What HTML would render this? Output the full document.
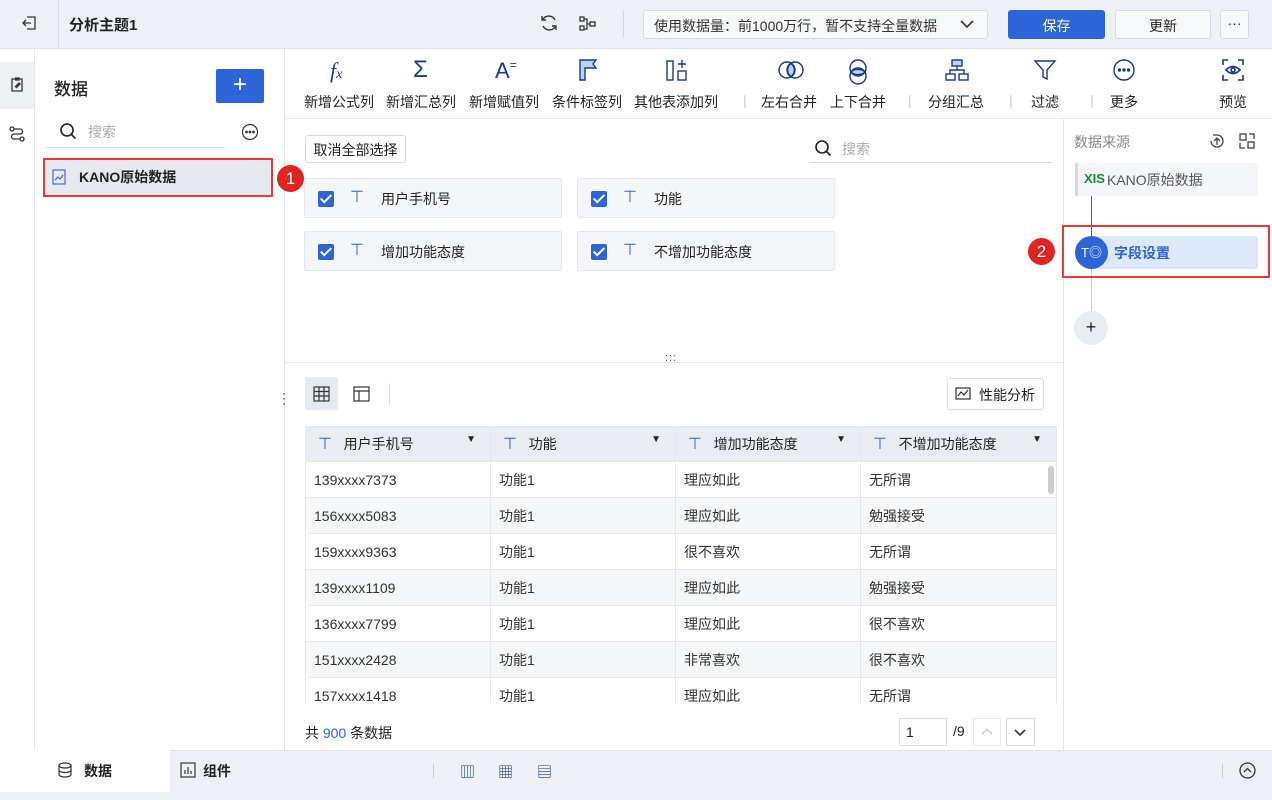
<!DOCTYPE html>
<html><head><meta charset="utf-8"><style>
*{box-sizing:border-box;margin:0;padding:0}
body{width:1272px;height:800px;overflow:hidden;font-family:"Liberation Sans","Noto Sans CJK SC",sans-serif;font-size:14px;color:#222;background:#fff;position:relative}
.a{position:absolute}
.tb{background:#edf0f5}
.btn{position:absolute;border:1px solid #d5d9e0;border-radius:3px;background:#f7f8fa;text-align:center}
.chk{position:absolute;width:16px;height:16px;background:#2d64d8;border-radius:2px}
.chk:after{content:"";position:absolute;left:5px;top:1px;width:4px;height:9px;border:solid #fff;border-width:0 2px 2px 0;transform:rotate(45deg)}
.card{position:absolute;width:258px;height:40px;border:1px solid #e3e6eb;background:#f4f6f9;border-radius:2px}
.card span{position:absolute;top:10px}
.T{color:#2d64d8;font-size:16px}
.tool{position:absolute;top:92px;font-size:14px;color:#222;white-space:nowrap}
.ic{position:absolute;top:58px}
table{border-collapse:collapse;position:absolute;left:305px;top:426px}
td{width:185px;height:36px;border:1px solid #e5e7eb;padding-left:8px;font-size:14px;color:#333}
tr.h td{background:#e9edf3;height:35px;color:#222}
tr:nth-child(odd):not(.h) td{background:#f6f7f9}
</style></head><body>
<div class="a tb" style="left:0;top:0;width:1272px;height:49px;border-bottom:1px solid #e0e3e8"></div>
<div class="a" style="left:58px;top:0;width:1px;height:49px;background:#d8dce2"></div>
<svg class="a" style="left:20px;top:14px" width="18" height="18" viewBox="0 0 18 18" fill="none" stroke="#333" stroke-width="1.3"><path d="M7 3h8v12H7M3 9h8M6 6l-3 3 3 3"/></svg>
<div class="a" style="left:69px;top:14px;font-weight:bold;font-size:15px">分析主题1</div>
<svg class="a" style="left:539px;top:13px" width="20" height="20" viewBox="0 0 20 20" fill="none" stroke="#333" stroke-width="1.4"><path d="M16 7a7 7 0 00-12-1M4 13a7 7 0 0012 1"/><path d="M3 3v4h4M17 17v-4h-4"/></svg>
<svg class="a" style="left:578px;top:14px" width="20" height="20" viewBox="0 0 20 20" fill="none" stroke="#333" stroke-width="1.3"><rect x="2" y="3" width="4" height="4"/><rect x="2" y="12" width="4" height="4"/><rect x="12" y="8" width="5" height="4"/><path d="M6 5h3v10H6M9 10h3"/></svg>
<div class="a" style="left:623px;top:10px;width:1px;height:28px;background:#d5d9e0"></div>
<div class="btn" style="left:643px;top:10px;width:345px;height:29px;background:#f7f8fa;text-align:left;padding:5px 0 0 10px;font-size:14px;color:#333">使用数据量：前1000万行，暂不支持全量数据</div>
<svg class="a" style="left:959px;top:17px" width="16" height="14" viewBox="0 0 16 14" fill="none" stroke="#333" stroke-width="1.6"><path d="M2 4l6 6 6-6"/></svg>
<div class="btn" style="left:1008px;top:10px;width:97px;height:29px;background:#2d64d8;border-color:#2d64d8;color:#fff;padding-top:5px">保存</div>
<div class="btn" style="left:1115px;top:10px;width:96px;height:29px;padding-top:5px">更新</div>
<div class="btn" style="left:1220px;top:10px;width:29px;height:29px;padding-top:4px">···</div>

<div class="a" style="left:0;top:49px;width:35px;height:701px;border-right:1px solid #e3e6eb"></div>
<div class="a" style="left:0;top:62px;width:34px;height:47px;background:#eef0f4"></div>
<svg class="a" style="left:8px;top:76px" width="18" height="18" viewBox="0 0 18 18" fill="none" stroke="#333" stroke-width="1.3"><path d="M4 3h10v12H4zM7 2h4v2H7M7 11l4-4 1 1-4 4"/></svg>
<svg class="a" style="left:8px;top:125px" width="18" height="18" viewBox="0 0 18 18" fill="none" stroke="#333" stroke-width="1.3"><circle cx="4" cy="4" r="2"/><circle cx="14" cy="14" r="2"/><path d="M6 4h6a2.5 2.5 0 010 5H6a2.5 2.5 0 000 5h6"/></svg>

<div class="a" style="left:284px;top:49px;width:1px;height:701px;background:#e3e6eb"></div>
<div class="a" style="left:54px;top:75px;font-size:17px;font-weight:500">数据</div>
<div class="a" style="left:216px;top:69px;width:48px;height:34px;background:#2d64d8;border-radius:2px;color:#fff;font-size:24px;text-align:center;line-height:32px">+</div>
<svg class="a" style="left:59px;top:122px" width="18" height="18" viewBox="0 0 18 18" fill="none" stroke="#222" stroke-width="1.6"><circle cx="8" cy="8" r="6"/><path d="M12.5 12.5l4 4"/></svg>
<div class="a" style="left:88px;top:122px;color:#aaa">搜索</div>
<div class="a" style="left:45px;top:147px;width:180px;height:1px;background:#d8dce2"></div>
<svg class="a" style="left:241px;top:123px" width="18" height="18" viewBox="0 0 18 18" fill="none" stroke="#333" stroke-width="1.2"><circle cx="9" cy="9" r="7.5"/><circle cx="5.5" cy="9" r=".8" fill="#333"/><circle cx="9" cy="9" r=".8" fill="#333"/><circle cx="12.5" cy="9" r=".8" fill="#333"/></svg>
<div class="a" style="left:43px;top:158px;width:230px;height:39px;background:#e6e9ef;border:2px solid #e83a3a"></div>
<svg class="a" style="left:52px;top:169px" width="14" height="16" viewBox="0 0 14 16" fill="none" stroke="#2d64d8" stroke-width="1.1"><rect x="1" y="1" width="12" height="14"/><path d="M3 11l3-3 2 2 3-4"/></svg>
<div class="a" style="left:79px;top:167px;font-weight:bold;font-size:14px">KANO原始数据</div>
<div class="a" style="left:277px;top:165px;width:27px;height:27px;border-radius:50%;background:#e02424;color:#fff;font-size:17px;text-align:center;line-height:27px">1</div>
<div class="a" style="left:277px;top:390px;color:#555;font-size:14px">⋮</div>

<div class="a" style="left:285px;top:118px;width:987px;height:1px;background:#e3e6eb"></div>
<div class="a ic" style="left:330px;font-size:22px;font-style:italic;font-family:'Liberation Serif',serif;color:#1c3a80">f<span style="font-size:14px">x</span></div>
<div class="a ic" style="left:413px;font-size:24px;color:#1c3a80;top:56px">Σ</div>
<div class="a ic" style="left:495px;font-size:22px;color:#1c3a80">A<span style="font-size:12px;vertical-align:top">=</span></div>
<svg class="a ic" style="left:577px" width="22" height="24" viewBox="0 0 22 24" fill="none" stroke="#1c3a80" stroke-width="1.4"><path d="M3 2h16l-3 4 3 4H8v12H3z" fill="#bcd2f5"/></svg>
<svg class="a ic" style="left:665px" width="24" height="24" viewBox="0 0 24 24" fill="none" stroke="#1c3a80" stroke-width="1.4"><rect x="2" y="3" width="6" height="19"/><rect x="13" y="13" width="8" height="9"/><path d="M17 2v8M13 6h8"/></svg>
<svg class="a ic" style="left:777px" width="28" height="24" viewBox="0 0 28 24" fill="none" stroke="#1c3a80" stroke-width="1.4"><circle cx="10" cy="12" r="8"/><circle cx="18" cy="12" r="8"/><path d="M14 5.5a8 8 0 010 13 8 8 0 010-13z" fill="#bcd2f5"/></svg>
<svg class="a ic" style="left:846px" width="24" height="28" viewBox="0 0 24 28" fill="none" stroke="#1c3a80" stroke-width="1.4"><circle cx="12" cy="10" r="8"/><circle cx="12" cy="18" r="8"/><path d="M5 14a8 5 0 0114 0 8 5 0 01-14 0z" fill="#bcd2f5"/></svg>
<svg class="a ic" style="left:944px" width="26" height="24" viewBox="0 0 26 24" fill="none" stroke="#1c3a80" stroke-width="1.4"><rect x="8" y="2" width="10" height="6" fill="#bcd2f5"/><rect x="2" y="16" width="9" height="6"/><rect x="15" y="16" width="9" height="6"/><path d="M13 8v4M6 16v-4h14v4"/></svg>
<svg class="a ic" style="left:1033px" width="24" height="24" viewBox="0 0 24 24" fill="none" stroke="#1c3a80" stroke-width="1.4"><path d="M2 3h20l-8 9v9l-4-2v-7z"/></svg>
<svg class="a ic" style="left:1112px" width="24" height="24" viewBox="0 0 24 24" fill="none" stroke="#1c3a80" stroke-width="1.4"><circle cx="12" cy="12" r="10"/><circle cx="7.5" cy="12" r="1" fill="#1c3a80"/><circle cx="12" cy="12" r="1" fill="#1c3a80"/><circle cx="16.5" cy="12" r="1" fill="#1c3a80"/></svg>
<svg class="a ic" style="left:1221px" width="24" height="24" viewBox="0 0 24 24" fill="none" stroke="#1c3a80" stroke-width="1.6"><path d="M2 7V2h5M17 2h5v5M22 17v5h-5M7 22H2v-5"/><path d="M5 12q7-7 14 0q-7 7-14 0z"/><circle cx="12" cy="12" r="2"/></svg>
<div class="tool" style="left:304px">新增公式列</div>
<div class="tool" style="left:386px">新增汇总列</div>
<div class="tool" style="left:469px">新增赋值列</div>
<div class="tool" style="left:552px">条件标签列</div>
<div class="tool" style="left:634px">其他表添加列</div>
<div class="tool" style="left:743px;color:#ccc">|</div>
<div class="tool" style="left:761px">左右合并</div>
<div class="tool" style="left:830px">上下合并</div>
<div class="tool" style="left:908px;color:#ccc">|</div>
<div class="tool" style="left:928px">分组汇总</div>
<div class="tool" style="left:1009px;color:#ccc">|</div>
<div class="tool" style="left:1031px">过滤</div>
<div class="tool" style="left:1090px;color:#ccc">|</div>
<div class="tool" style="left:1110px">更多</div>
<div class="tool" style="left:1219px">预览</div>

<div class="btn" style="left:305px;top:135px;width:101px;height:28px;background:#fff;padding-top:4px;font-size:14px">取消全部选择</div>
<svg class="a" style="left:814px;top:139px" width="18" height="18" viewBox="0 0 18 18" fill="none" stroke="#222" stroke-width="1.6"><circle cx="8" cy="8" r="6"/><path d="M12.5 12.5l4 4"/></svg>
<div class="a" style="left:842px;top:139px;color:#aaa">搜索</div>
<div class="a" style="left:809px;top:162px;width:243px;height:1px;background:#d8dce2"></div>
<div class="card" style="left:304px;top:178px"><div class="chk" style="left:13px;top:12px"></div><span class="T" style="left:45px;top:8px">⊤</span><span style="left:76px">用户手机号</span></div>
<div class="card" style="left:577px;top:178px"><div class="chk" style="left:13px;top:12px"></div><span class="T" style="left:45px;top:8px">⊤</span><span style="left:76px">功能</span></div>
<div class="card" style="left:304px;top:231px"><div class="chk" style="left:13px;top:12px"></div><span class="T" style="left:45px;top:8px">⊤</span><span style="left:76px">增加功能态度</span></div>
<div class="card" style="left:577px;top:231px"><div class="chk" style="left:13px;top:12px"></div><span class="T" style="left:45px;top:8px">⊤</span><span style="left:76px">不增加功能态度</span></div>
<div class="a" style="left:285px;top:362px;width:778px;height:1px;background:#e3e6eb"></div>
<div class="a" style="left:665px;top:352px;font-size:11px;color:#555;letter-spacing:1px">:::</div>

<div class="a" style="left:305px;top:377px;width:33px;height:33px;background:#e6e9ef;border-radius:2px"></div>
<svg class="a" style="left:313px;top:386px" width="17" height="16" viewBox="0 0 17 16" fill="none" stroke="#333" stroke-width="1.2"><rect x="1" y="1" width="15" height="14"/><path d="M1 5.5h15M1 10h15M6 1v14M11 1v14"/></svg>
<svg class="a" style="left:353px;top:386px" width="17" height="16" viewBox="0 0 17 16" fill="none" stroke="#333" stroke-width="1.2"><rect x="1" y="1" width="15" height="14"/><path d="M1 5h15M6 5v10"/></svg>
<div class="a" style="left:389px;top:383px;width:1px;height:22px;background:#ddd"></div>
<div class="btn" style="left:947px;top:378px;width:97px;height:32px;background:#fff;padding:6px 0 0 31px;text-align:left">性能分析</div>
<svg class="a" style="left:955px;top:386px" width="16" height="16" viewBox="0 0 16 16" fill="none" stroke="#333" stroke-width="1.2"><rect x="1" y="2" width="14" height="11"/><path d="M3 10l3-4 3 3 4-5"/></svg>
<table>
<tr class="h"><td style="padding-left:12px"><span class="T">⊤</span>&nbsp;&nbsp; 用户手机号<span style="float:right;margin-right:14px;font-size:10px">▼</span></td><td style="padding-left:12px"><span class="T">⊤</span>&nbsp;&nbsp; 功能<span style="float:right;margin-right:14px;font-size:10px">▼</span></td><td style="padding-left:12px"><span class="T">⊤</span>&nbsp;&nbsp; 增加功能态度<span style="float:right;margin-right:14px;font-size:10px">▼</span></td><td style="padding-left:12px;width:196px"><span class="T">⊤</span>&nbsp;&nbsp; 不增加功能态度<span style="float:right;margin-right:14px;font-size:10px">▼</span></td></tr>
<tr><td>139xxxx7373</td><td>功能1</td><td>理应如此</td><td>无所谓</td></tr>
<tr><td>156xxxx5083</td><td>功能1</td><td>理应如此</td><td>勉强接受</td></tr>
<tr><td>159xxxx9363</td><td>功能1</td><td>很不喜欢</td><td>无所谓</td></tr>
<tr><td>139xxxx1109</td><td>功能1</td><td>理应如此</td><td>勉强接受</td></tr>
<tr><td>136xxxx7799</td><td>功能1</td><td>理应如此</td><td>很不喜欢</td></tr>
<tr><td>151xxxx2428</td><td>功能1</td><td>非常喜欢</td><td>很不喜欢</td></tr>
<tr><td>157xxxx1418</td><td>功能1</td><td>理应如此</td><td>无所谓</td></tr>
</table>
<div class="a" style="left:285px;top:703px;width:778px;height:47px;background:#fff"></div>
<div class="a" style="left:1048px;top:466px;width:6px;height:28px;background:#ccc;border-radius:3px"></div>
<div class="a" style="left:305px;top:723px">共 <span style="color:#2d64d8">900</span> 条数据</div>
<div class="a" style="left:899px;top:718px;width:48px;height:28px;border:1px solid #d5d9e0;padding:5px 6px">1</div>
<div class="a" style="left:953px;top:723px">/9</div>
<div class="a" style="left:973px;top:718px;width:28px;height:28px;border:1px solid #e3e6eb"></div>
<svg class="a" style="left:979px;top:724px" width="16" height="16" viewBox="0 0 16 16" fill="none" stroke="#ccc" stroke-width="1.5"><path d="M3 10l5-5 5 5"/></svg>
<div class="a" style="left:1006px;top:718px;width:29px;height:28px;border:1px solid #d5d9e0"></div>
<svg class="a" style="left:1012px;top:724px" width="16" height="16" viewBox="0 0 16 16" fill="none" stroke="#333" stroke-width="1.6"><path d="M3 6l5 5 5-5"/></svg>

<div class="a" style="left:1063px;top:119px;width:1px;height:631px;background:#e3e6eb"></div>
<div class="a" style="left:1074px;top:132px;color:#888">数据来源</div>
<svg class="a" style="left:1208px;top:132px" width="18" height="18" viewBox="0 0 18 18" fill="none" stroke="#444" stroke-width="1.3"><path d="M3 9a6 6 0 106-6H5M9 6v7M6 9l3-3 3 3"/></svg>
<svg class="a" style="left:1238px;top:132px" width="18" height="18" viewBox="0 0 18 18" fill="none" stroke="#444" stroke-width="1.3"><rect x="2" y="2" width="6" height="6"/><rect x="10" y="10" width="6" height="6"/><path d="M2 11v5h5M11 2h5v5"/></svg>
<div class="a" style="left:1075px;top:163px;width:183px;height:33px;background:#f4f6f9;border-left:3px solid #d5d9e0"></div>
<div class="a" style="left:1084px;top:171px;color:#1a8a3a;font-size:13px;font-weight:bold">XIS</div>
<div class="a" style="left:1107px;top:170px;color:#555">KANO原始数据</div>
<div class="a" style="left:1091px;top:196px;width:1px;height:40px;background:#2d64d8"></div>
<div class="a" style="left:1091px;top:269px;width:1px;height:42px;background:#ccc"></div>
<div class="a" style="left:1075px;top:236px;width:183px;height:33px;background:#dde8fb;border-radius:17px 3px 3px 17px"></div>
<div class="a" style="left:1075px;top:236px;width:33px;height:33px;background:#2d64d8;border-radius:50%;color:#fff;text-align:center;line-height:33px;font-size:13px">T◎</div>
<div class="a" style="left:1114px;top:243px;color:#2d64d8;font-weight:bold">字段设置</div>
<div class="a" style="left:1062px;top:225px;width:208px;height:53px;border:2px solid #e83a3a"></div>
<div class="a" style="left:1028px;top:238px;width:27px;height:27px;border-radius:50%;background:#e02424;color:#fff;font-size:17px;text-align:center;line-height:27px">2</div>
<div class="a" style="left:1074px;top:311px;width:34px;height:34px;border-radius:50%;background:#e9ecf1;text-align:center;line-height:33px;font-size:18px">+</div>

<div class="a tb" style="left:0;top:750px;width:1272px;height:50px;border-top:1px solid #e0e3e8"></div>
<div class="a" style="left:0;top:750px;width:170px;height:42px;background:#fff"></div>
<svg class="a" style="left:57px;top:762px" width="16" height="16" viewBox="0 0 16 16" fill="none" stroke="#333" stroke-width="1.2"><ellipse cx="8" cy="3.5" rx="6" ry="2.5"/><path d="M2 3.5v9c0 1.4 2.7 2.5 6 2.5s6-1.1 6-2.5v-9M2 8c0 1.4 2.7 2.5 6 2.5S14 9.4 14 8"/></svg>
<div class="a" style="left:84px;top:761px;font-weight:bold">数据</div>
<svg class="a" style="left:180px;top:762px" width="16" height="16" viewBox="0 0 16 16" fill="none" stroke="#333" stroke-width="1.2"><rect x="1" y="1" width="14" height="14"/><path d="M5 12V8M8 12V5M11 12V9"/></svg>
<div class="a" style="left:203px;top:761px;font-weight:bold">组件</div>
<div class="a" style="left:433px;top:764px;width:1px;height:14px;background:#ccc"></div>
<div class="a" style="left:460px;top:761px;color:#1c3a80;font-size:15px">▥</div>
<div class="a" style="left:498px;top:761px;color:#1c3a80;font-size:15px">▦</div>
<div class="a" style="left:537px;top:761px;color:#1c3a80;font-size:15px">▤</div>
<div class="a" style="left:1222px;top:764px;width:1px;height:14px;background:#ccc"></div>
<svg class="a" style="left:1239px;top:762px" width="17" height="17" viewBox="0 0 17 17" fill="none" stroke="#333" stroke-width="1.3"><circle cx="8.5" cy="8.5" r="7.5"/><path d="M5 10l3.5-3.5L12 10"/></svg>
</body></html>
